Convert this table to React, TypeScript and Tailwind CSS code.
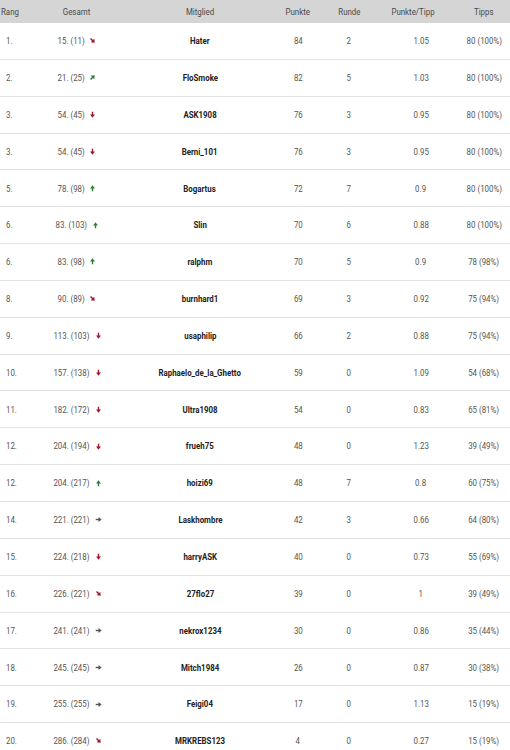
type Trend = "down" | "up" | "sdown" | "sup" | "same";

const rows: [string, string, Trend, string, number, number, string, string][] = [
  ["1.", "15. (11)", "sdown", "Hater", 84, 2, "1.05", "80 (100%)"],
  ["2.", "21. (25)", "sup", "FloSmoke", 82, 5, "1.03", "80 (100%)"],
  ["3.", "54. (45)", "down", "ASK1908", 76, 3, "0.95", "80 (100%)"],
  ["3.", "54. (45)", "down", "Berni_101", 76, 3, "0.95", "80 (100%)"],
  ["5.", "78. (98)", "up", "Bogartus", 72, 7, "0.9", "80 (100%)"],
  ["6.", "83. (103)", "up", "Slin", 70, 6, "0.88", "80 (100%)"],
  ["6.", "83. (98)", "up", "ralphm", 70, 5, "0.9", "78 (98%)"],
  ["8.", "90. (89)", "sdown", "burnhard1", 69, 3, "0.92", "75 (94%)"],
  ["9.", "113. (103)", "down", "usaphilip", 66, 2, "0.88", "75 (94%)"],
  ["10.", "157. (138)", "down", "Raphaelo_de_la_Ghetto", 59, 0, "1.09", "54 (68%)"],
  ["11.", "182. (172)", "down", "Ultra1908", 54, 0, "0.83", "65 (81%)"],
  ["12.", "204. (194)", "down", "frueh75", 48, 0, "1.23", "39 (49%)"],
  ["12.", "204. (217)", "up", "hoizi69", 48, 7, "0.8", "60 (75%)"],
  ["14.", "221. (221)", "same", "Laskhombre", 42, 3, "0.66", "64 (80%)"],
  ["15.", "224. (218)", "down", "harryASK", 40, 0, "0.73", "55 (69%)"],
  ["16.", "226. (221)", "sdown", "27flo27", 39, 0, "1", "39 (49%)"],
  ["17.", "241. (241)", "same", "nekrox1234", 30, 0, "0.86", "35 (44%)"],
  ["18.", "245. (245)", "same", "Mitch1984", 26, 0, "0.87", "30 (38%)"],
  ["19.", "255. (255)", "same", "Feigi04", 17, 0, "1.13", "15 (19%)"],
  ["20.", "286. (284)", "sdown", "MRKREBS123", 4, 0, "0.27", "15 (19%)"],
];

const rotation: Record<Trend, number> = { up: -90, sup: -45, same: 0, sdown: 45, down: 90 };

function Arrow({ t }: { t: Trend }) {
  const color = t === "up" || t === "sup" ? "#2f7d3a" : t === "same" ? "#555555" : "#a3142f";
  return (
    <svg width="7" height="7" viewBox="0 0 10 10" className="ml-[5px]" style={{ transform: `rotate(${rotation[t]}deg)` }}>
      <path d="M1 5H7" stroke={color} strokeWidth="2" />
      <path d="M5 1.5L9.5 5L5 8.5Z" fill={color} />
    </svg>
  );
}

// narrow text, like the condensed face on the site
const N = ({ children, left }: { children: React.ReactNode; left?: boolean }) => (
  <span className={`inline-block scale-x-[0.83] whitespace-nowrap ${left ? "origin-left" : "origin-center"}`}>{children}</span>
);

const cols = "grid grid-cols-[40px_78px_164px_32px_70px_74px_52px] items-center";

export default function App() {
  return (
    <div className="w-[510px] bg-white text-[9.5px] leading-none text-[#555]" style={{ fontFamily: "Roboto, 'Liberation Sans', sans-serif" }}>
      <div className={`${cols} h-[23px] bg-[#d5d5d5] text-[#4a4a4a]`}>
        <div className="pl-[1px]"><N left>Rang</N></div>
        <div className="text-center pr-[4px]"><N>Gesamt</N></div>
        <div className="text-center"><N>Mitglied</N></div>
        <div className="text-center"><N>Punkte</N></div>
        <div className="text-center"><N>Runde</N></div>
        <div className="text-center pr-[16px]"><N>Punkte/Tipp</N></div>
        <div className="text-center"><N>Tipps</N></div>
      </div>
      {rows.map((r, i) => (
        <div key={i} className={`${cols} h-[36.85px] border-b border-[#e2e2e2]`}>
          <div className="pl-[6px]"><N left>{r[0]}</N></div>
          <div className="flex items-center justify-center pr-[10px]">
            <span className="inline-block scale-x-[0.83] origin-right whitespace-nowrap">{r[1]}</span>
            <Arrow t={r[2]} />
          </div>
          <div className="text-center font-bold text-[#222]"><N>{r[3]}</N></div>
          <div className="text-center"><N>{r[4]}</N></div>
          <div className="text-center"><N>{r[5]}</N></div>
          <div className="text-center"><N>{r[6]}</N></div>
          <div className="text-center"><N>{r[7]}</N></div>
        </div>
      ))}
    </div>
  );
}
